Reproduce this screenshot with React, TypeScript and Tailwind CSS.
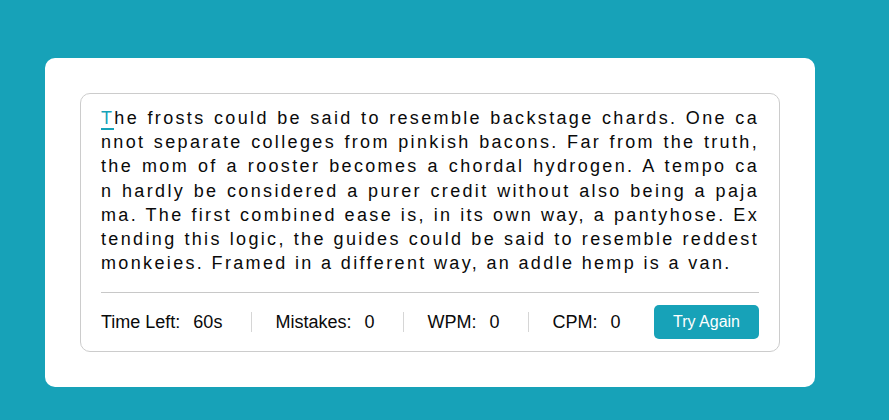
import React from "react";

const lines = [
  "The frosts could be said to resemble backstage chards. One ca",
  "nnot separate colleges from pinkish bacons. Far from the truth,",
  "the mom of a rooster becomes a chordal hydrogen. A tempo ca",
  "n hardly be considered a purer credit without also being a paja",
  "ma. The first combined ease is, in its own way, a pantyhose. Ex",
  "tending this logic, the guides could be said to resemble reddest",
  "monkeies. Framed in a different way, an addle hemp is a van.",
];

const stats = [
  { label: "Time Left:", value: "60s" },
  { label: "Mistakes:", value: "0" },
  { label: "WPM:", value: "0" },
  { label: "CPM:", value: "0" },
];

export default function App() {
  return (
    <div className="min-h-screen bg-[#17a2b8] pl-[45px] pt-[58px] font-['Liberation_Sans',Arial,sans-serif]">
      <div className="w-[770px] rounded-[10px] bg-white p-[35px]">
        <div className="rounded-[10px] border border-[#cccccc] px-[20px] pt-[12px] pb-[12px]">
          {/* passage, one row per rendered line */}
          <div className="text-[18px] leading-[24.2px] tracking-[2.35px] text-[#0a0a0a]">
            {lines.map((line, i) => {
              const last = i === lines.length - 1;
              return (
                <div
                  key={i}
                  className={
                    last
                      ? "whitespace-pre text-left"
                      : "text-justify [text-align-last:justify]"
                  }
                >
                  {i === 0 ? (
                    <>
                      <span className="border-b-2 border-[#17a2b8] text-[#17a2b8]">
                        {line[0]}
                      </span>
                      {line.slice(1)}
                    </>
                  ) : (
                    line
                  )}
                </div>
              );
            })}
          </div>

          <hr className="mt-[17px] border-0 border-t border-[#c8c8c8]" />

          <div className="mt-[12px] flex items-center text-[18px] text-[#0a0a0a]">
            {stats.map((s, i) => (
              <React.Fragment key={s.label}>
                {i > 0 && (
                  <div className="ml-[29px] mr-[23px] h-[20px] w-px bg-[#d6d6d6]" />
                )}
                <div className="flex items-center">
                  <span>{s.label}</span>
                  <span className="ml-[13px]">{s.value}</span>
                </div>
              </React.Fragment>
            ))}
            <button className="ml-auto h-[34px] w-[105px] rounded-[5px] bg-[#17a2b8] text-[16px] text-white">
              Try Again
            </button>
          </div>
        </div>
      </div>
    </div>
  );
}
